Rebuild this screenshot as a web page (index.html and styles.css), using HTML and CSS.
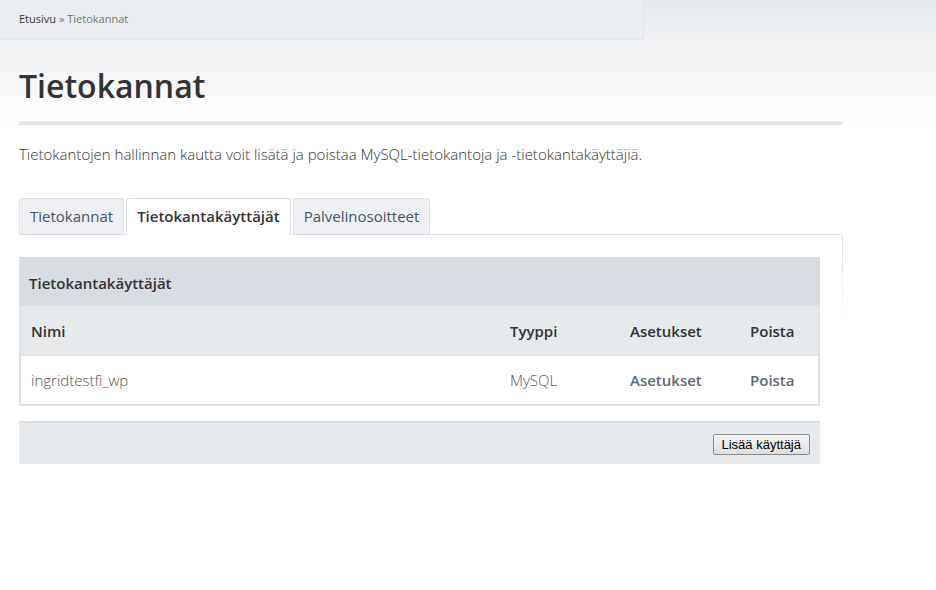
FILE: index.html
```html
<!DOCTYPE html>
<html lang="fi">
<head>
  <meta charset="UTF-8" />
  <meta name="viewport" content="width=device-width, initial-scale=1.0" />
  <title>Tietokannat</title>
  <link rel="stylesheet" href="styles.css">
</head>
<body>

  <div class="breadcrumb">
    <a href="#" class="crumb-home">Etusivu</a> &raquo; Tietokannat
  </div>

  <div class="content">
    <h1 class="page-title">Tietokannat</h1>

    <p class="intro">Tietokantojen hallinnan kautta voit lisätä ja poistaa MySQL-tietokantoja ja -tietokantakäyttäjiä.</p>

    <div class="tabs">
      <a href="#" class="tab">Tietokannat</a>
      <a href="#" class="tab active">Tietokantakäyttäjät</a>
      <a href="#" class="tab">Palvelinosoitteet</a>
    </div>

    <div class="tab-panel">
      <div class="users-table">
        <div class="table-caption">Tietokantakäyttäjät</div>
        <div class="table-row table-head">
          <span class="col-name">Nimi</span>
          <span class="col-type">Tyyppi</span>
          <span class="col-settings">Asetukset</span>
          <span class="col-delete">Poista</span>
        </div>
        <div class="table-row">
          <span class="col-name">ingridtestfi_wp</span>
          <span class="col-type">MySQL</span>
          <a href="#" class="col-settings action">Asetukset</a>
          <a href="#" class="col-delete action">Poista</a>
        </div>
      </div>

      <div class="table-footer">
        <button class="add-btn">Lisää käyttäjä</button>
      </div>
    </div>
  </div>

</body>
</html>
```

FILE: styles.css
```css
body {
  margin: 0;
  font-family: "Open Sans", sans-serif;
  color: #333;
  background: linear-gradient(to bottom, #e6e9ec 0, #ffffff 125px) no-repeat;
  min-height: 590px;
}

a {
  text-decoration: none;
}

.breadcrumb {
  width: 624px;
  height: 38px;
  padding-left: 19px;
  background: #eaedf0;
  border-right: 1px solid #e3e6e9;
  border-bottom: 2px solid #e3e6e9;
  font-size: 11px;
  line-height: 38px;
  color: #777;
}

.crumb-home {
  color: #333;
}

.content {
  width: 824px;
  padding-left: 19px;
}

.page-title {
  margin: 0;
  padding: 24px 0 13px;
  font-size: 32px;
  font-weight: 600;
  line-height: 44px;
  color: #333;
  border-bottom: 4px solid #e5e8eb;
}

.intro {
  margin: 18px 0 0;
  font-size: 15px;
  font-weight: 300;
  line-height: 22px;
  color: #333;
}

.tabs {
  display: flex;
  gap: 2px;
  margin-top: 33px;
}

.tab {
  padding: 0 10px;
  height: 35px;
  line-height: 35px;
  font-size: 15px;
  color: #445566;
  background: #eef0f3;
  border: 1px solid #dcdfe3;
  border-bottom: none;
  border-radius: 3px 3px 0 0;
}

.tab.active {
  height: 36px;
  margin-bottom: -1px;
  position: relative;
  z-index: 1;
  background: #fff;
  font-weight: 600;
  color: #333;
}

.tab-panel {
  padding: 22px 23px 0 0;
  border-top: 1px solid #dcdfe3;
  border-top-right-radius: 4px;
  background: linear-gradient(to bottom, #dcdfe3, rgba(220, 223, 227, 0) 92px) right top / 1px 100% no-repeat;
}

.users-table {
  border: 2px solid #dde1e5;
  border-top: none;
}

.table-caption {
  height: 49px;
  line-height: 52px;
  padding-left: 10px;
  margin: 0 -2px;
  background: #d7dde3;
  font-size: 15px;
  font-weight: 600;
}

.table-row {
  display: flex;
  align-items: center;
  height: 48px;
  font-size: 15px;
  font-weight: 300;
  color: #555;
  background: #fff;
}

.table-head {
  height: 49px;
  background: #e7eaed;
  border-bottom: 1px solid #dde1e5;
  font-weight: 600;
  color: #333;
}

.col-name {
  width: 479px;
  padding-left: 10px;
}

.col-type {
  width: 120px;
}

.col-settings {
  width: 120px;
}

.action {
  font-weight: 600;
  color: #5d6a74;
}

.table-footer {
  display: flex;
  justify-content: flex-end;
  align-items: center;
  margin-top: 15px;
  height: 41px;
  padding-right: 10px;
  background: #e7eaed;
  border-top: 2px solid #dbdfe3;
}

.add-btn {
  font-family: "Liberation Sans", Arial, sans-serif;
  font-size: 13px;
  color: #000;
  height: 21px;
  padding: 0 8px;
  background: linear-gradient(to bottom, #f6f6f6, #dedede);
  border: 1px solid #8a8a8a;
  border-radius: 2px;
  margin-top: 1px;
}
```
